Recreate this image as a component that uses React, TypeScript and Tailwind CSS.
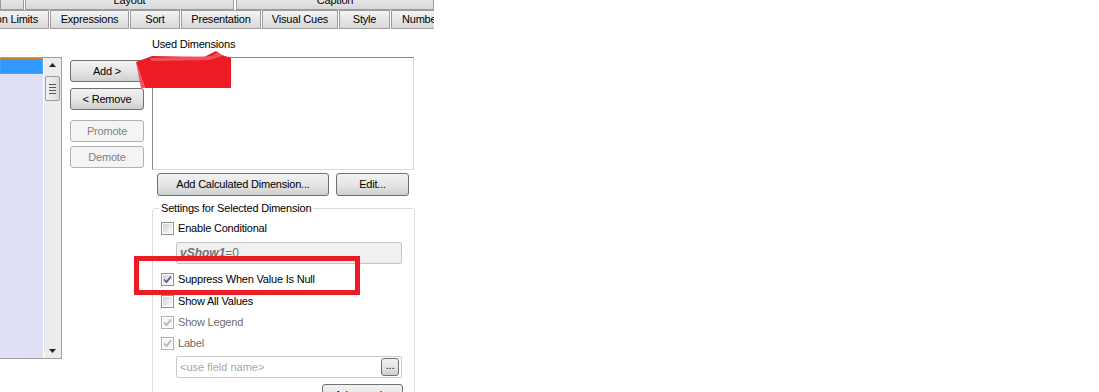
import React from 'react';

const font = { fontFamily: '"Liberation Sans", Arial, sans-serif' };

function Tab({ label, className = '', align = 'center' }: { label: string; className?: string; align?: 'center' | 'end' }) {
  return (
    <div
      className={`h-full shrink-0 flex items-center overflow-hidden whitespace-nowrap border border-[#9c9c9c] bg-gradient-to-b from-[#f4f4f4] to-[#d8d8d8] text-[11px] tracking-[-0.2px] text-black ${align === 'end' ? 'justify-end pr-[10px]' : 'justify-center'} ${className}`}
    >
      {label}
    </div>
  );
}

function Btn({ children, className = '', disabled = false }: { children: React.ReactNode; className?: string; disabled?: boolean }) {
  return (
    <div
      className={`shrink-0 flex items-center justify-center rounded-[3px] border text-[11px] tracking-[-0.2px] whitespace-nowrap ${
        disabled
          ? 'border-[#adb2b5] bg-[#f4f4f4] text-[#838383]'
          : 'border-[#707070] bg-gradient-to-b from-[#f2f2f2] via-[#e6e6e6] to-[#cfcfcf] text-black'
      } ${className}`}
    >
      {children}
    </div>
  );
}

function Check({ checked = false, disabled = false }: { checked?: boolean; disabled?: boolean }) {
  return (
    <div
      className={`w-[13px] h-[13px] shrink-0 border p-[1px] ${disabled ? 'border-[#b1b1b1]' : 'border-[#8e8f8f]'}`}
    >
      <div
        className={`w-full h-full flex items-center justify-center ${
          disabled ? 'bg-[#f4f4f4]' : 'bg-gradient-to-br from-[#d3d3d3] to-[#fbfbfb]'
        }`}
      >
        {checked && (
          <svg width="9" height="9" viewBox="0 0 9 9">
            <path
              d="M1 4.5 L3.5 7 L8 1.5"
              fill="none"
              stroke={disabled ? '#b3b3b3' : '#4b5d85'}
              strokeWidth="1.6"
            />
          </svg>
        )}
      </div>
    </div>
  );
}

function CheckRow({ label, checked, disabled, className = '' }: { label: string; checked?: boolean; disabled?: boolean; className?: string }) {
  return (
    <div className={`flex items-center h-[13px] gap-[4px] ${className}`}>
      <Check checked={checked} disabled={disabled} />
      <span className={`text-[11px] tracking-[-0.2px] leading-none ${disabled ? 'text-[#6d6d6d]' : 'text-black'}`}>{label}</span>
    </div>
  );
}

export default function App() {
  return (
    <div className="relative w-[1099px] h-[392px] bg-white overflow-hidden" style={font}>
      <div className="w-[434px] flex flex-col">
        {/* top tab row, cut off */}
        <div className="h-[10px] overflow-hidden flex">
          <div className="h-[20px] -mt-[10px] flex w-full">
            <Tab label="" className="w-[24px]" />
            <Tab label="Layout" className="w-[209px] ml-[1px]" />
            <Tab label="Caption" className="w-[198px] ml-[2px]" />
          </div>
        </div>
        {/* second tab row */}
        <div className="h-[19px] flex gap-[1px] overflow-hidden">
          <Tab label="on Limits" className="w-[49px] border-l-0" align="end" />
          <Tab label="Expressions" className="w-[79px]" />
          <Tab label="Sort" className="w-[50px]" />
          <Tab label="Presentation" className="w-[80px]" />
          <Tab label="Visual Cues" className="w-[76px]" />
          <Tab label="Style" className="w-[51px]" />
          <Tab label="Numbe" className="w-[60px] justify-start pl-[10px]" />
        </div>

        {/* body */}
        <div className="flex items-start">
          {/* field list */}
          <div className="mt-[28px] w-[62px] h-[302px] shrink-0 flex border-r border-b border-t border-[#a0a0a0]">
            <div className="flex-1 bg-[#dfdff5] border-r border-white">
              <div className="h-[16px] bg-[#3399ff] border border-dotted border-[#e08a2a]" />
            </div>
            <div className="w-[17px] shrink-0 bg-[#ececec] flex flex-col items-center">
              <svg className="mt-[5px]" width="7" height="4" viewBox="0 0 7 4">
                <path d="M3.5 0 L7 4 L0 4 Z" fill="#222" />
              </svg>
              <div className="mt-[9px] w-[15px] h-[25px] rounded-[2px] border border-[#9a9a9a] bg-gradient-to-r from-[#f1f1f1] to-[#dcdcdc] flex flex-col items-center justify-center gap-[2px]">
                <div className="w-[7px] h-[1px] bg-[#555]" />
                <div className="w-[7px] h-[1px] bg-[#555]" />
                <div className="w-[7px] h-[1px] bg-[#555]" />
                <div className="w-[7px] h-[1px] bg-[#555]" />
              </div>
              <div className="flex-1" />
              <svg className="mb-[5px]" width="7" height="4" viewBox="0 0 7 4">
                <path d="M0 0 L7 0 L3.5 4 Z" fill="#222" />
              </svg>
            </div>
          </div>

          {/* add / remove column */}
          <div className="ml-[8px] mt-[31px] w-[74px] flex flex-col">
            <Btn className="h-[22px]">Add &gt;</Btn>
            <Btn className="h-[22px] mt-[6px]">&lt; Remove</Btn>
            <Btn className="h-[22px] mt-[10px]" disabled>
              Promote
            </Btn>
            <Btn className="h-[22px] mt-[4px]" disabled>
              Demote
            </Btn>
          </div>

          {/* used dimensions */}
          <div className="ml-[8px] w-[263px] flex flex-col">
            <div className="h-[28px] flex items-center pt-[2px] text-[11px] tracking-[-0.2px] text-black">Used Dimensions</div>
            <div className="w-[262px] h-[113px] border border-t-[#828790] border-l-[#828790] border-r-[#dadada] border-b-[#dadada] bg-white" />
            <div className="flex mt-[3px] ml-[5px]">
              <Btn className="w-[172px] h-[23px]">Add Calculated Dimension...</Btn>
              <Btn className="w-[73px] h-[23px] ml-[7px]">Edit...</Btn>
            </div>

            <fieldset className="mt-[6px] w-[263px] border border-[#d5dfe5] rounded-[3px] pl-[8px] pb-[20px]">
              <legend className="px-[2px] -ml-[2px] text-[11px] tracking-[-0.2px] leading-[13px] text-black">
                Settings for Selected Dimension
              </legend>
              <CheckRow label="Enable Conditional" className="mt-[7px]" />
              <div className="mt-[7px] ml-[15px] w-[226px] h-[22px] rounded-[2px] border border-[#c5c5c5] bg-[#f0f0f0] flex items-center pl-[3px] text-[12px] text-[#707070]">
                <span className="font-bold italic">vShow1</span>
                <span>=0</span>
              </div>
              <CheckRow label="Suppress When Value Is Null" checked className="mt-[9px]" />
              <CheckRow label="Show All Values" className="mt-[9px]" />
              <CheckRow label="Show Legend" checked disabled className="mt-[8px]" />
              <CheckRow label="Label" checked disabled className="mt-[8px]" />
              <div className="mt-[6px] ml-[15px] w-[226px] h-[22px] rounded-[2px] border border-[#c9cbcf] bg-white flex items-center justify-between pl-[3px] pr-[2px] text-[11px] text-[#a8a8a8]">
                <span>&lt;use field name&gt;</span>
                <Btn className="w-[18px] h-[18px] text-[10px] items-end pb-[2px]">...</Btn>
              </div>
              <div className="flex justify-end pr-[11px] mt-[6px]">
                <Btn className="w-[81px] h-[22px]">Advanced...</Btn>
              </div>
            </fieldset>
          </div>
        </div>
      </div>

      {/* red marker scribble over the used dimension */}
      <svg className="absolute left-0 top-0 pointer-events-none" width="260" height="100" viewBox="0 0 260 100">
        <path d="M136 62 L152 56 L204 57 L216 51 L222 55 L231 58 L231 88 L145 88 Z" fill="#ed1c24" />
        <path d="M150 58 L212 56 L218 52 L222 56 L210 60 L152 61 Z" fill="#f26a6f" opacity="0.7" />
        <path d="M136 62 L145 88 L141 88 Z" fill="#f0545a" />
      </svg>

      {/* red highlight box */}
      <div className="absolute left-[134px] top-[256px] w-[226px] h-[39px] border-[5px] border-[#ed1c24] pointer-events-none" />
    </div>
  );
}
